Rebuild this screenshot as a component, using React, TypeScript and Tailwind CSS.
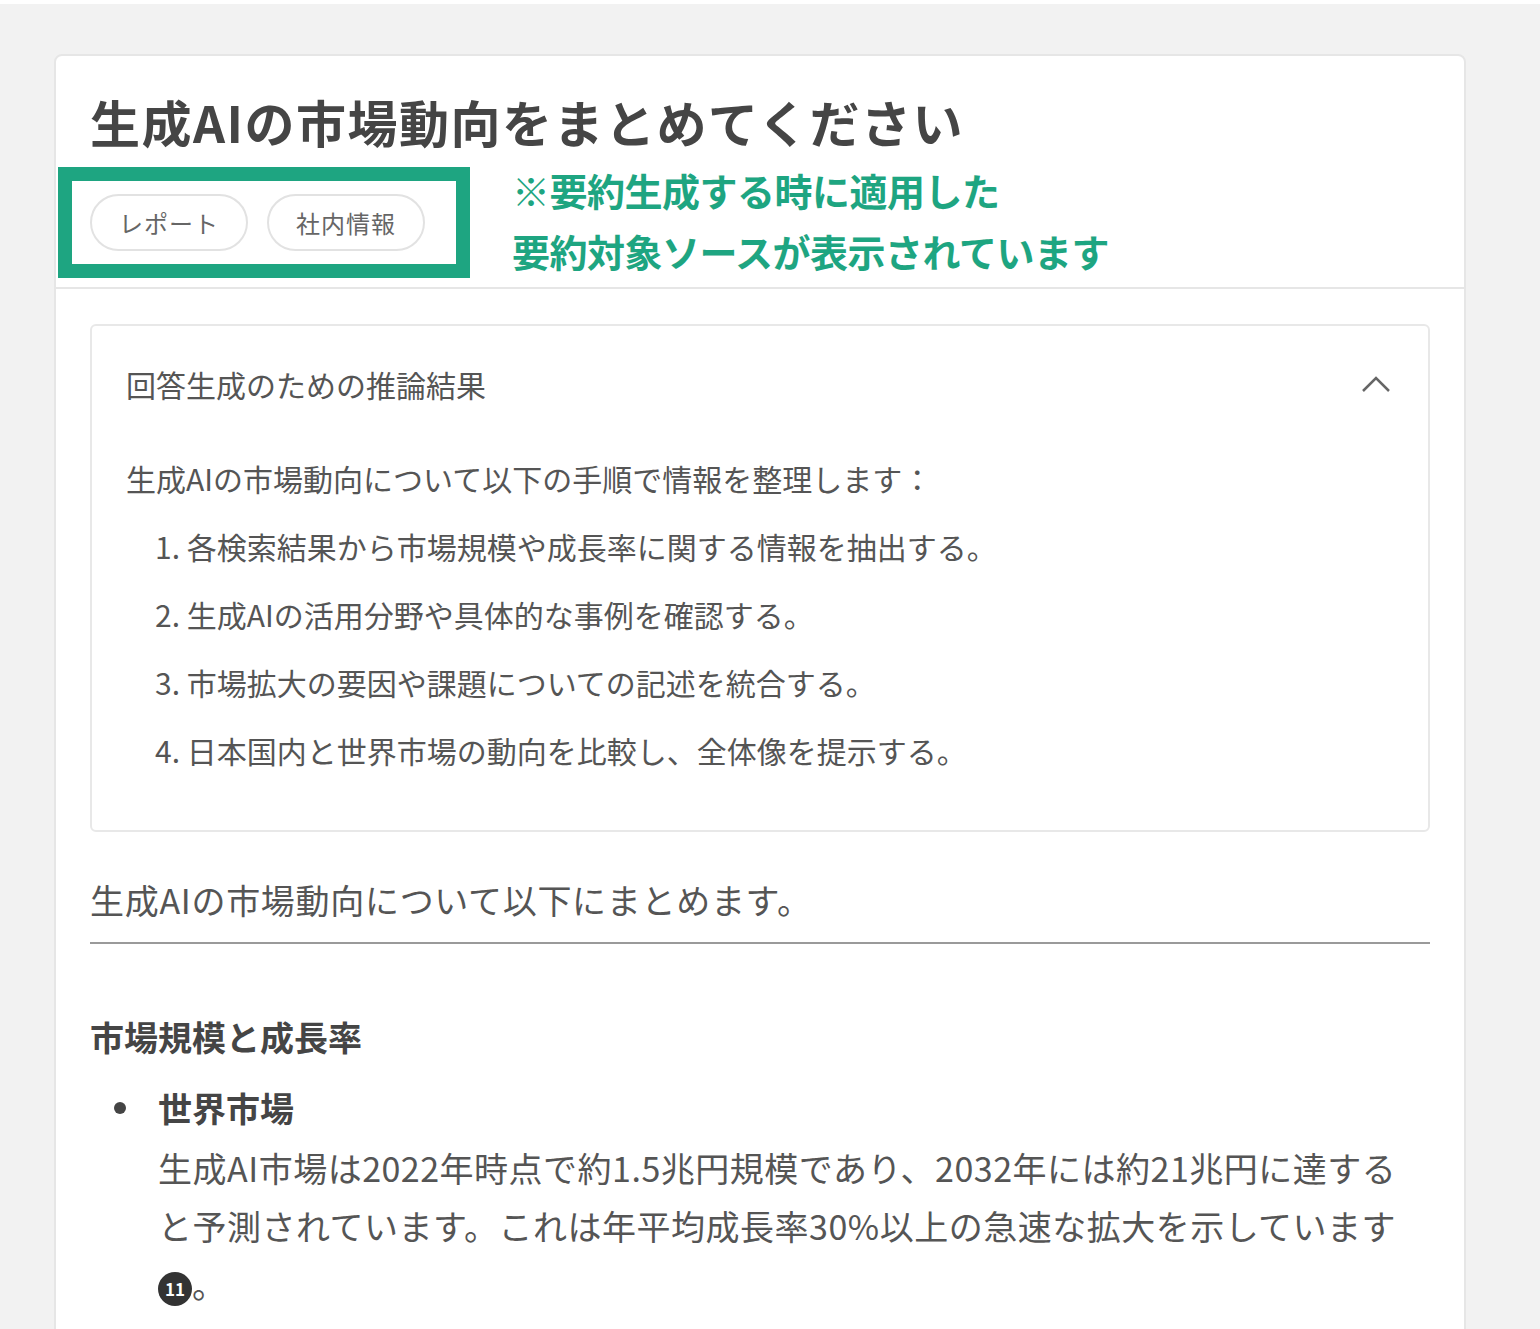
import React from 'react'

const jp = { fontFamily: '"Noto Sans CJK JP", "Noto Sans", sans-serif' }

const steps = [
  '各検索結果から市場規模や成長率に関する情報を抽出する。',
  '生成AIの活用分野や具体的な事例を確認する。',
  '市場拡大の要因や課題についての記述を統合する。',
  '日本国内と世界市場の動向を比較し、全体像を提示する。',
]

function Chip({ label }: { label: string }) {
  return (
    <span className="inline-flex items-center h-[57px] px-[27px] rounded-full border-2 border-[#e2e2e2] text-[24px] text-[#666] leading-none tracking-[1px]">
      {label}
    </span>
  )
}

export default function App() {
  return (
    <div style={jp} className="min-h-[1329px] bg-[#f2f2f2] overflow-hidden">
      <div className="h-[4px] bg-white" />
      <div className="ml-[54px] mt-[50px] w-[1412px] bg-white border-2 border-[#e6e6e6] rounded-t-[8px]">
        {/* Header */}
        <div className="relative px-[34px] pt-[35px] pb-[36px] border-b-2 border-[#e6e6e6]">
          <h1 className="text-[50px] leading-[60px] font-bold text-[#454545] tracking-[1.5px]">
            生成AIの市場動向をまとめてください
          </h1>
          <div className="flex gap-[19px] mt-[43px]">
            <Chip label="レポート" />
            <Chip label="社内情報" />
          </div>

          {/* annotation overlay */}
          <div className="absolute left-[2px] top-[111px] w-[412px] h-[111px] border-[14px] border-[#1ea581]" />
          <div className="absolute left-[456px] top-[103px] text-[38px] leading-[61px] font-bold text-[#1ea581] tracking-[-0.5px]">
            <p>※要約生成する時に適用した</p>
            <p>要約対象ソースが表示されています</p>
          </div>
        </div>

        {/* Body */}
        <div className="px-[34px] pt-[35px] pb-[40px]">
          <div className="border-2 border-[#e8e8e8] rounded-[6px] px-[34px] pt-[38px] pb-[46px]">
            <div className="flex items-center justify-between">
              <span className="text-[30px] leading-[40px] text-[#555]">回答生成のための推論結果</span>
              <svg width="32" height="18" viewBox="0 0 32 18" className="mr-[2px]">
                <polyline points="3,16 16,3 29,16" fill="none" stroke="#666" strokeWidth="2.5" />
              </svg>
            </div>
            <p className="mt-[40px] text-[30px] leading-[68px] text-[#555]">
              生成AIの市場動向について以下の手順で情報を整理します：
            </p>
            <ol className="pl-[29px] text-[30px] leading-[68px] text-[#555]">
              {steps.map((s, i) => (
                <li key={i}>
                  {i + 1}. {s}
                </li>
              ))}
            </ol>
          </div>

          <p className="mt-[39px] text-[34px] leading-[58px] text-[#555] tracking-[0.7px]">
            生成AIの市場動向について以下にまとめます。
          </p>
          <div className="mt-[13px] h-[2px] bg-[#9a9a9a]" />

          <h2 className="mt-[64px] text-[34px] leading-[58px] font-bold text-[#454545]">市場規模と成長率</h2>
          <div className="mt-[13px] flex">
            <div className="w-[68px] pt-[23px] pl-[24px]">
              <span className="block w-[12px] h-[12px] rounded-full bg-[#444]" />
            </div>
            <div className="w-[1255px]">
              <p className="text-[34px] leading-[58px] font-bold text-[#454545]">世界市場</p>
              <p className="mt-[2px] text-[34px] leading-[58px] text-[#555] tracking-[0.5px]">
                生成AI市場は2022年時点で約1.5兆円規模であり、2032年には約21兆円に達すると予測されています。これは年平均成長率30%以上の急速な拡大を示しています
                <span className="inline-flex items-center justify-center align-middle w-[34px] h-[34px] rounded-full bg-[#333] text-white text-[17px] font-bold leading-none tracking-normal">
                  11
                </span>
                。
              </p>
            </div>
          </div>
        </div>
      </div>
    </div>
  )
}
